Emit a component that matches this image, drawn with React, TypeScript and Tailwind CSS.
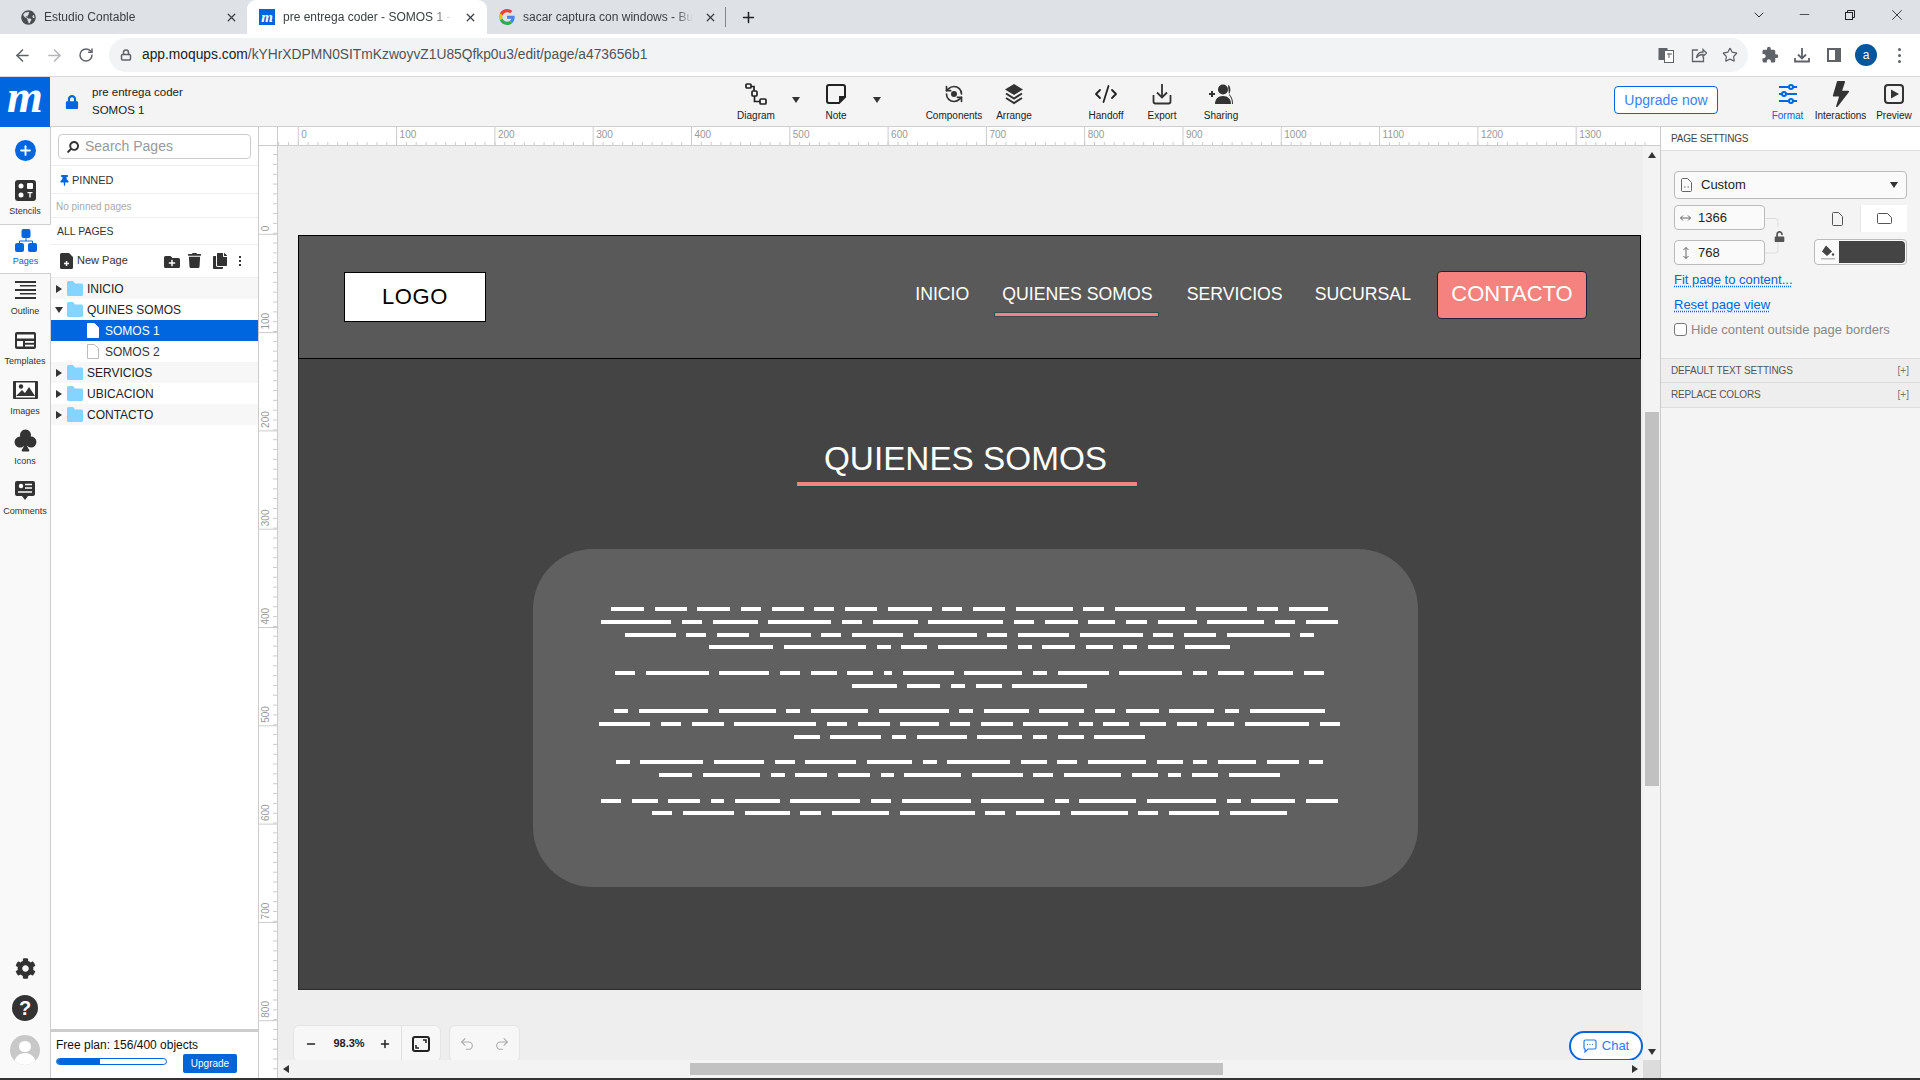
import React from "react";
import { ArrowLeft, ArrowRight, ChevronDown, Lock, Minus, Plus, RotateCw, Star, Undo2, Redo2, X, CodeXml, RefreshCcw } from "lucide-react";
import { BsLightningFill, BsSuitClubFill } from "react-icons/bs";
import { FaCog, FaCopy, FaFolderPlus, FaGlobeAmericas, FaLock, FaSearch, FaThumbtack, FaTrash, FaUnlock } from "react-icons/fa";
import { MdExtension } from "react-icons/md";

const font = { fontFamily: '"Liberation Sans", Arial, sans-serif' };

// widths of the redacted words, one array per line, lines grouped in paragraphs
const paragraphs = [
  [
    [33, 32, 33, 20, 32, 20, 32, 44, 20, 32, 57, 21, 70, 51, 21, 39],
    [70, 20, 45, 63, 20, 45, 75, 20, 33, 27, 21, 39, 57, 20, 32],
    [51, 20, 32, 51, 20, 51, 63, 20, 51, 63, 20, 32, 63, 14],
    [64, 82, 14, 26, 69, 14, 33, 27, 14, 26, 45],
  ],
  [
    [20, 63, 50, 20, 26, 26, 8, 51, 58, 14, 51, 63, 14, 26, 39, 20],
    [45, 33, 14, 26, 75],
  ],
  [
    [14, 69, 57, 14, 57, 70, 14, 45, 45, 20, 33, 45, 14, 75],
    [51, 20, 32, 82, 20, 32, 39, 20, 32, 45, 14, 26, 26, 20, 27, 64, 20],
    [26, 51, 14, 50, 45, 14, 26, 51],
  ],
  [
    [14, 63, 50, 20, 51, 45, 14, 63, 26, 20, 58, 26, 14, 38, 32, 14],
    [33, 57, 14, 32, 32, 13, 57, 51, 20, 57, 26, 13, 26, 51],
  ],
  [
    [20, 26, 32, 13, 45, 70, 20, 69, 63, 14, 57, 69, 14, 44, 32],
    [20, 51, 45, 21, 57, 75, 20, 44, 57, 20, 50, 57],
  ],
];

const Caret = ({ dir = "down", className = "" }: { dir?: "down" | "up" | "left" | "right"; className?: string }) => {
  const pts = { down: "0,1 8,1 4,7", up: "0,7 8,7 4,1", left: "7,0 7,8 1,4", right: "1,0 1,8 7,4" }[dir];
  return (
    <svg width="8" height="8" viewBox="0 0 8 8" className={className}>
      <polygon points={pts} fill="#333" />
    </svg>
  );
};

const GoogleG = () => (
  <svg width="16" height="16" viewBox="0 0 48 48">
    <path fill="#EA4335" d="M24 9.5c3.5 0 6.700 1.300 9.100 3.500l6.800-6.800C35.800 2.400 30.300 0 24 0 14.600 0 6.500 5.400 2.600 13.200l7.900 6.100C12.400 13.600 17.700 9.500 24 9.500z" />
    <path fill="#4285F4" d="M46.900 24.500c0-1.600-.1-3.100-.4-4.500H24v9h12.900c-.6 3-2.200 5.500-4.800 7.200l7.700 6c4.500-4.200 7.100-10.300 7.100-17.700z" />
    <path fill="#FBBC05" d="M10.500 28.700c-.5-1.500-.8-3-.8-4.700s.3-3.200.8-4.700l-7.900-6.100C.9 16.500 0 20.100 0 24s.9 7.500 2.600 10.800l7.900-6.100z" />
    <path fill="#34A853" d="M24 48c6.500 0 11.900-2.100 15.800-5.800l-7.700-6c-2.100 1.400-4.900 2.300-8.100 2.300-6.300 0-11.600-4.100-13.500-9.800l-7.900 6.100C6.500 42.600 14.600 48 24 48z" />
  </svg>
);

const Tab = ({ icon, title, active, width }: { icon: React.ReactNode; title: string; active?: boolean; width: string }) => (
  <div className={`flex h-[34px] items-center pl-[12px] shrink-0 ${width} ${active ? "bg-white rounded-t-[9px]" : ""}`}>
    <div className="w-[16px] flex justify-center shrink-0">{icon}</div>
    <div className={`ml-[8px] w-[170px] overflow-hidden whitespace-nowrap text-[12px] text-[#3c4043] ${active ? "[mask-image:linear-gradient(to_right,black_88%,transparent)]" : "[mask-image:linear-gradient(to_right,black_90%,transparent)]"}`}>{title}</div>
    <X size={13} strokeWidth={2.4} className="ml-[11px] text-[#3c4043] shrink-0" />
  </div>
);

const BrowserChrome = () => (
  <div className="shrink-0">
    <div className="flex h-[34px] bg-[#dee1e6] items-center">
      <div className="w-[8px] shrink-0" />
      <Tab width="w-[239px]" title="Estudio Contable" icon={<FaGlobeAmericas size={15} className="text-[#4a4d50]" />} />
      <Tab
        width="w-[240px]"
        active
        title="pre entrega coder - SOMOS 1 - Moqups"
        icon={<div className="w-[16px] h-[16px] bg-[#0066e0] text-white flex items-center justify-center text-[15px] italic font-bold leading-none" style={{ fontFamily: '"Liberation Serif", serif' }}>m</div>}
      />
      <Tab width="w-[238px]" title="sacar captura con windows - Buscar con Google" icon={<GoogleG />} />
      <div className="w-px h-[20px] bg-[#80868b]" />
      <Plus size={17} strokeWidth={2.2} className="ml-[14px] text-[#202124]" />
      <div className="ml-auto flex items-center text-[#202124] -mt-[5px]">
        <ChevronDown size={16} strokeWidth={1.4} className="mr-[30px]" />
        <Minus size={15} strokeWidth={1.2} className="mr-[32px]" />
        <svg width="12" height="12" viewBox="0 0 12 12" fill="none" stroke="#202124" className="mr-[32px]">
          <rect x="1.500" y="3.500" width="7" height="7" />
          <path d="M3.500 3.500V1.500h7v7H8.500" />
        </svg>
        <X size={18} strokeWidth={1.1} className="mr-[14px]" />
      </div>
    </div>
    <div className="flex h-[43px] bg-white border-b border-[#d8d8d8] items-center">
      <ArrowLeft size={19} strokeWidth={2} className="ml-[13px] text-[#5f6368]" />
      <ArrowRight size={19} strokeWidth={2} className="ml-[13px] text-[#b4b6b9]" />
      <RotateCw size={16} strokeWidth={2.2} className="ml-[14px] text-[#5f6368]" />
      <div className="ml-[15px] flex items-center h-[34px] w-[1639px] rounded-full bg-[#f1f3f4]">
        <Lock size={12} strokeWidth={3} className="ml-[11px] text-[#5f6368]" />
        <div className="ml-[10px] text-[13.800px] text-[#202124]">
          app.moqups.com<span className="text-[#50545a]">/kYHrXDPMN0SITmKzwoyvZ1U85Qfkp0u3/edit/page/a473656b1</span>
        </div>
        <div className="ml-auto flex items-center">
          <svg width="16" height="16" viewBox="0 0 16 16" className="mr-[17px]">
            <rect x="0.500" y="1" width="9" height="12" fill="#5f6368" />
            <rect x="6.500" y="3.500" width="9" height="12" fill="#fff" stroke="#5f6368" />
            <path d="M9 7h5M11 6v5" stroke="#5f6368" />
          </svg>
          <svg width="16" height="16" viewBox="0 0 16 16" fill="none" stroke="#5f6368" strokeWidth="1.300" className="mr-[15px]">
            <path d="M7 3H1.500v11.500h11V10" />
            <path d="M5.500 11c.5-4 3-6 6.500-6V2.500L15.500 6 12 9.500V7.500c-3 0-5 1-6.500 3.500z" />
          </svg>
          <Star size={16} strokeWidth={1.8} className="mr-[10px] text-[#5f6368]" />
        </div>
      </div>
      <MdExtension size={18} className="ml-[13px] text-[#5f6368]" />
      <svg width="16" height="16" viewBox="0 0 16 16" fill="none" stroke="#5f6368" strokeWidth="1.800" className="ml-[15px]">
        <path d="M8 1v10M4 7.500 8 11.500l4-4M1 11v3.500h14V11" />
      </svg>
      <svg width="14" height="14" viewBox="0 0 14 14" className="ml-[17px]">
        <rect x="1" y="1" width="12" height="12" fill="none" stroke="#5f6368" strokeWidth="2" />
        <rect x="8" y="1" width="5" height="12" fill="#5f6368" />
      </svg>
      <div className="ml-[14px] w-[22px] h-[22px] rounded-full bg-[#01579b] text-white text-[12px] flex items-center justify-center">a</div>
      <div className="ml-[21px] flex flex-col gap-[3px]">
        <div className="w-[3px] h-[3px] rounded-full bg-[#5f6368]" />
        <div className="w-[3px] h-[3px] rounded-full bg-[#5f6368]" />
        <div className="w-[3px] h-[3px] rounded-full bg-[#5f6368]" />
      </div>
    </div>
  </div>
);

const ToolBtn = ({ icon, label, width, active, className = "" }: { icon: React.ReactNode; label: string; width: string; active?: boolean; className?: string }) => (
  <div className={`flex flex-col items-center shrink-0 ${width} ${className}`}>
    <div className="h-[25px] mt-[4px] flex items-center justify-center">{icon}</div>
    <div className={`mt-[4px] text-[10px] leading-[12px] whitespace-nowrap ${active ? "text-[#0066e0]" : "text-[#222]"}`}>{label}</div>
  </div>
);

const AppHeader = () => (
  <div className="flex h-[50px] shrink-0 bg-[#f4f4f4] border-b border-[#d0d0d0]">
    <div className="w-[50px] h-[50px] bg-[#0066e0] text-white flex items-center justify-center text-[46px] italic font-bold leading-none pb-[10px]" style={{ fontFamily: '"Liberation Serif", serif' }}>m</div>
    <FaLock size={14} className="ml-[15px] mt-[18px] text-[#0066e0]" />
    <div className="ml-[13px] w-[636px] text-[11.500px] leading-[18px] text-[#222] pt-[6px]">
      <div>pre entrega coder</div>
      <div>SOMOS 1</div>
    </div>
    <ToolBtn
      width="w-[56px]"
      label="Diagram"
      icon={
        <svg width="22" height="22" viewBox="0 0 22 22" fill="none" stroke="#222" strokeWidth="1.700">
          <rect x="1" y="1" width="5" height="4" rx="1" />
          <rect x="7" y="8" width="5" height="5" rx="1" />
          <rect x="15" y="16" width="6" height="5" rx="1" />
          <path d="M6 3.500h3v4.500M9.500 13v5.500H15" />
        </svg>
      }
    />
    <div className="w-[24px] flex items-center justify-center pb-[3px]"><Caret /></div>
    <ToolBtn
      width="w-[56px]"
      label="Note"
      icon={
        <svg width="20" height="20" viewBox="0 0 20 20" fill="none" stroke="#222" strokeWidth="2">
          <path d="M3 1h14a2 2 0 0 1 2 2v10l-6 6H3a2 2 0 0 1-2-2V3a2 2 0 0 1 2-2z" />
          <path d="M19 12h-6v7z" fill="#222" stroke="none" />
        </svg>
      }
    />
    <div className="w-[24px] flex items-center justify-center pb-[3px] ml-px"><Caret /></div>
    <ToolBtn
      width="w-[60px]"
      className="ml-[35px]"
      label="Components"
      icon={
        <div className="relative flex items-center justify-center">
          <RefreshCcw size={20} strokeWidth={2} className="text-[#333]" />
          <div className="absolute w-[6px] h-[6px] rounded-full bg-[#333]" />
        </div>
      }
    />
    <ToolBtn
      width="w-[60px]"
      label="Arrange"
      icon={
        <svg width="20" height="22" viewBox="0 0 20 22">
          <polygon points="10,1 19,6.500 10,12 1,6.500" fill="#333" />
          <path d="M2 10.500l8 5 8-5M2 15l8 5 8-5" fill="none" stroke="#333" strokeWidth="2" />
        </svg>
      }
    />
    <ToolBtn width="w-[56px]" className="ml-[34px]" label="Handoff" icon={<CodeXml size={24} strokeWidth={1.8} className="text-[#222]" />} />
    <ToolBtn
      width="w-[56px]"
      label="Export"
      icon={
        <svg width="20" height="22" viewBox="0 0 20 22" fill="none" stroke="#333" strokeWidth="1.800">
          <path d="M10 1v13M5 9.500l5 5 5-5M1.500 12v6.500a2 2 0 0 0 2 2h13a2 2 0 0 0 2-2V12" />
        </svg>
      }
    />
    <ToolBtn
      width="w-[56px]"
      className="ml-[3px]"
      label="Sharing"
      icon={
        <svg width="24" height="20" viewBox="0 0 24 20" fill="#333">
          <path d="M0 9h6v2H0zM2 7h2v6H2z" />
          <circle cx="14" cy="5.500" r="5" />
          <path d="M6 20c0-5 3-8 8-8s8 3 8 8z" />
          <path d="M19 1c3 1 3 7 1 9 2 2 4 4 4 10h-1c0-4-1-7-3-9z" />
        </svg>
      }
    />
    <div className="ml-auto flex">
      <div className="w-[104px] h-[28px] mt-[9px] rounded-[4px] border border-[#0066e0] bg-white text-[14px] text-[#3b82f0] flex items-center justify-center">Upgrade now</div>
      <ToolBtn
        width="w-[53px]"
        className="ml-[43px]"
        active
        label="Format"
        icon={
          <svg width="20" height="22" viewBox="0 0 20 22" stroke="#0066e0" strokeWidth="2" fill="#f4f4f4">
            <path d="M1 4h18M1 11h18M1 18h18" />
            <circle cx="13" cy="4" r="2" />
            <circle cx="6" cy="11" r="2" />
            <circle cx="13" cy="18" r="2" />
          </svg>
        }
      />
      <ToolBtn width="w-[53px]" label="Interactions" icon={<BsLightningFill size={26} className="text-[#333]" />} />
      <ToolBtn
        width="w-[52px]"
        className="ml-px"
        label="Preview"
        icon={
          <svg width="20" height="20" viewBox="0 0 20 20">
            <rect x="1" y="1" width="18" height="18" rx="3" fill="none" stroke="#333" strokeWidth="2" />
            <polygon points="7,5.500 15,10 7,14.500" fill="#333" />
          </svg>
        }
      />
    </div>
  </div>
);

const SideItem = ({ icon, label, active, className = "" }: { icon: React.ReactNode; label: string; active?: boolean; className?: string }) => (
  <div className={`flex flex-col items-center h-[50px] shrink-0 ${active ? "pt-[3px] relative w-[51px] bg-white text-[#0066e0] border-y border-[#d0d0d0]" : "pt-[4px] w-[50px] text-[#333]"} ${className}`}>
    <div className="h-[24px] flex items-center justify-center">{icon}</div>
    <div className="mt-[3px] text-[9px] leading-[12px]">{label}</div>
  </div>
);

const Sidebar = () => (
  <div className="w-[51px] shrink-0 flex flex-col bg-[#f9f9f9] border-r border-[#ccc]">
    <div className="h-[47px] flex items-center justify-center shrink-0">
      <div className="w-[21px] h-[21px] rounded-full bg-[#0066e0] flex items-center justify-center">
        <Plus size={15} strokeWidth={3} className="text-white" />
      </div>
    </div>
    <SideItem
      label="Stencils"
      icon={
        <svg width="21" height="21" viewBox="0 0 21 21">
          <rect width="21" height="21" rx="3" fill="#333" />
          <circle cx="6" cy="6" r="2.500" fill="#fff" />
          <rect x="12" y="3" width="6" height="6" rx="1" fill="#fff" />
          <circle cx="6" cy="15" r="2.500" fill="#fff" />
          <path d="M12.500 12h5v1.200h-1.800v4.300h-1.400v-4.300h-1.800z" fill="#fff" />
        </svg>
      }
    />
    <SideItem
      active
      label="Pages"
      icon={
        <svg width="22" height="23" viewBox="0 0 22 23" fill="#0066e0">
          <rect x="6.500" y="0" width="9" height="9" rx="2" />
          <rect x="0" y="14" width="9" height="9" rx="2" />
          <rect x="13" y="14" width="9" height="9" rx="2" />
          <path d="M11 9v3M4.500 14v-2h13v2" stroke="#0066e0" fill="none" />
        </svg>
      }
    />
    <SideItem
      label="Outline"
      icon={
        <svg width="21" height="18" viewBox="0 0 21 18" fill="#333">
          <rect x="0" y="0" width="21" height="2" />
          <rect x="5" y="4" width="16" height="1.500" />
          <rect x="0" y="8" width="21" height="2" />
          <rect x="5" y="12" width="16" height="1.500" />
          <rect x="0" y="16" width="21" height="2" />
        </svg>
      }
    />
    <SideItem
      label="Templates"
      icon={
        <svg width="21" height="17" viewBox="0 0 21 17">
          <rect width="21" height="17" rx="2" fill="#333" />
          <rect x="2" y="2.500" width="17" height="4" fill="#fff" />
          <rect x="2" y="9" width="6" height="5.500" fill="#fff" />
          <rect x="10" y="9" width="9" height="1.800" fill="#fff" />
          <rect x="10" y="12.700" width="9" height="1.800" fill="#fff" />
        </svg>
      }
    />
    <SideItem
      label="Images"
      icon={
        <svg width="25" height="18" viewBox="0 0 25 18">
          <rect width="25" height="18" rx="1" fill="#333" />
          <rect x="3" y="1.500" width="19" height="15" fill="#fff" />
          <circle cx="8" cy="5.500" r="2.200" fill="#333" />
          <polygon points="3,15 9,9 12,12 16,6 22,15" fill="#333" />
        </svg>
      }
    />
    <SideItem label="Icons" icon={<BsSuitClubFill size={25} className="text-[#333]" />} />
    <SideItem
      label="Comments"
      icon={
        <svg width="20" height="19" viewBox="0 0 20 19">
          <path d="M2 0h16a2 2 0 0 1 2 2v11a2 2 0 0 1-2 2h-5l-3 4-3-4H2a2 2 0 0 1-2-2V2a2 2 0 0 1 2-2z" fill="#333" />
          <circle cx="6" cy="5" r="2.200" fill="#fff" />
          <path d="M10 3.500h7M10 7h7M3 11h14" stroke="#fff" strokeWidth="1.500" />
        </svg>
      }
    />
    <div className="mt-auto flex flex-col items-center">
      <FaCog size={21} className="text-[#333]" />
      <div className="mt-[16px] w-[26px] h-[26px] rounded-full bg-[#333] text-white flex items-center justify-center text-[20px] font-bold leading-none">?</div>
      <div className="mt-[14px] mb-[13px] w-[30px] h-[30px] rounded-full bg-[#c8c8c8] overflow-hidden flex flex-col items-center">
        <div className="mt-[6px] w-[12px] h-[13px] rounded-full bg-white" />
        <div className="mt-[1px] w-[22px] h-[14px] rounded-t-full bg-white" />
      </div>
    </div>
  </div>
);

const FolderIcon = () => (
  <svg width="16" height="15" viewBox="0 0 16 15">
    <path d="M1.500 0h4.500l2 2.500h6.500a1.500 1.500 0 0 1 1.500 1.500v9.500a1.500 1.500 0 0 1-1.500 1.500h-13A1.500 1.500 0 0 1 0 13.500v-12A1.500 1.500 0 0 1 1.500 0z" fill="#84d4ff" />
  </svg>
);

const FolderRow = ({ name, open, shaded }: { name: string; open?: boolean; shaded?: boolean }) => (
  <div className={`flex items-center h-[21px] ${shaded ? "bg-[#f7f7f7]" : ""}`}>
    <Caret dir={open ? "down" : "right"} className="ml-[4px] shrink-0" />
    <div className="ml-[4px]"><FolderIcon /></div>
    <span className="ml-[4px] text-[12px] text-[#222]">{name}</span>
  </div>
);

const PageRow = ({ name, active }: { name: string; active?: boolean }) => (
  <div className={`flex items-center h-[21px] pl-[36px] ${active ? "bg-[#0066e0] text-white" : "text-[#333]"}`}>
    <svg width="12" height="15" viewBox="0 0 12 15">
      <path d="M.500.500h7l4 4v10h-11z" fill={active ? "#fff" : "none"} stroke={active ? "#fff" : "#bbb"} />
    </svg>
    <span className="ml-[6px] text-[12px]">{name}</span>
  </div>
);

const PagesPanel = () => (
  <div className="w-[208px] shrink-0 flex flex-col bg-white border-r border-[#ccc]">
    <div className="h-[39px] border-b border-[#eee] shrink-0 pl-[7px] pt-[7px]">
      <div className="w-[193px] h-[25px] border border-[#ccc] rounded-[4px] flex items-center">
        <FaSearch size={12} className="ml-[8px] -scale-x-100 text-[#333]" />
        <span className="ml-[6px] text-[14px] text-[#999]">Search Pages</span>
      </div>
    </div>
    <div className="h-[28px] border-b border-[#eee] shrink-0 flex items-center pl-[8px] pt-[2px]">
      <FaThumbtack size={11} className="text-[#0066e0]" />
      <span className="ml-[2px] text-[11px] text-[#333]">PINNED</span>
    </div>
    <div className="h-[24px] border-b border-[#eee] shrink-0 flex items-center pl-[5px] pt-[2px] text-[10px] text-[#aaa]">No pinned pages</div>
    <div className="h-[27px] border-b border-[#eee] shrink-0 flex items-center pl-[6px] pt-[2px] text-[10.500px] text-[#333]">ALL PAGES</div>
    <div className="h-[33px] border-b border-[#eee] shrink-0 flex items-center pl-[9px] pb-px text-[#333]">
      <svg width="13" height="16" viewBox="0 0 13 16">
        <path d="M1.500 0H9l4 4v10.500a1.500 1.500 0 0 1-1.500 1.500h-10A1.500 1.500 0 0 1 0 14.500v-13A1.500 1.500 0 0 1 1.500 0z" fill="#333" />
        <path d="M6.500 8v5M4 10.500h5" stroke="#fff" strokeWidth="1.500" />
      </svg>
      <span className="ml-[4px] text-[11px]">New Page</span>
      <FaFolderPlus size={16} className="ml-[36px] mt-[2px]" />
      <FaTrash size={15} className="ml-[7px]" />
      <FaCopy size={16} className="ml-[10px]" />
      <div className="ml-[11px] flex flex-col gap-[2px]">
        <div className="w-[2px] h-[2px] bg-[#333]" />
        <div className="w-[2px] h-[2px] bg-[#333]" />
        <div className="w-[2px] h-[2px] bg-[#333]" />
      </div>
    </div>
    <FolderRow name="INICIO" shaded />
    <FolderRow name="QUINES SOMOS" open />
    <PageRow name="SOMOS 1" active />
    <PageRow name="SOMOS 2" />
    <FolderRow name="SERVICIOS" shaded />
    <FolderRow name="UBICACION" />
    <FolderRow name="CONTACTO" shaded />
    <div className="mt-auto h-[49px] border-t-[3px] border-[#ccc] pl-[5px] pt-[6px] shrink-0">
      <div className="text-[12px] leading-[14px] text-[#111]">Free plan: 156/400 objects</div>
      <div className="flex items-start mt-[2px]">
        <div className="mt-[4px] w-[111px] h-[7px] rounded-full border border-[#0066e0] overflow-hidden bg-white">
          <div className="h-full bg-[#0066e0]" style={{ width: `${(156 / 400) * 100}%` }} />
        </div>
        <div className="ml-[16px] w-[54px] h-[19px] rounded-[2px] bg-[#0066d8] text-white text-[10px] flex items-center justify-center">Upgrade</div>
      </div>
    </div>
  </div>
);

const HRuler = () => {
  const zero = 39.3;
  const minors = Array.from({ length: 140 }, (_, i) => zero + i * 9.83 - 9.83 * 2);
  return (
    <svg width="1401" height="19" className="shrink-0 block bg-white">
      {minors.map((x, i) => (
        <line key={i} x1={x} x2={x} y1="15" y2="19" stroke="#ccc" />
      ))}
      <line x1="18.500" x2="18.500" y1="0" y2="19" stroke="#ccc" />
      {Array.from({ length: 14 }, (_, k) => (
        <g key={k}>
          <line x1={zero + k * 98.3} x2={zero + k * 98.3} y1="0" y2="19" stroke="#ccc" />
          <text x={zero + k * 98.3 + 3} y="11" fontSize="10" fill="#999" fontFamily="Liberation Sans">{k * 100}</text>
        </g>
      ))}
      <line x1="0" x2="1401" y1="18.500" y2="18.500" stroke="#ccc" />
    </svg>
  );
};

const VRuler = () => {
  const zero = 88.3;
  const minors = Array.from({ length: 95 }, (_, i) => 10 + i * 9.83 - 1.4);
  return (
    <svg width="19" height="932" className="shrink-0 block bg-white">
      {minors.map((y, i) => (
        <line key={i} x1="14" x2="19" y1={y} y2={y} stroke="#ccc" />
      ))}
      {Array.from({ length: 9 }, (_, k) => (
        <g key={k}>
          <line x1="0" x2="19" y1={zero + k * 98.3} y2={zero + k * 98.3} stroke="#ccc" />
          <text transform={`translate(9.500 ${zero + k * 98.3 - 3}) rotate(-90)`} fontSize="10" fill="#999" fontFamily="Liberation Sans">{k * 100}</text>
        </g>
      ))}
      <line x1="18.500" x2="18.500" y1="0" y2="932" stroke="#ccc" />
    </svg>
  );
};

const NavLink = ({ label, className = "" }: { label: string; className?: string }) => (
  <span className={`block text-[17.700px] pb-[2px] text-white whitespace-nowrap ${className}`}>{label}</span>
);

const MockPage = () => (
  <div className="w-[1343px] h-[755px] shrink-0 flex flex-col">
    <div className="h-[124px] shrink-0 bg-[#595959] border border-black flex items-center pl-[45px] pr-[53px]">
      <div className="w-[142px] h-[50px] pb-[2px] bg-white border border-black flex items-center justify-center text-[22px] tracking-[0.6px] text-black">LOGO</div>
      <div className="ml-auto flex items-center mb-[4px]">
        <NavLink label="INICIO" />
        <div className="relative ml-[33px]">
          <NavLink label="QUIENES SOMOS" />
          <div className="absolute -left-[7px] -right-[5px] -bottom-[7px] h-[3px] bg-[#f5827e] shadow-[0_0_0_1px_#3b4a4a]" />
        </div>
        <NavLink label="SERVICIOS" className="ml-[34px]" />
        <NavLink label="SUCURSAL" className="ml-[32px]" />
        <div className="ml-[26px] w-[150px] h-[48px] pb-[3px] rounded-[4px] bg-[#f5827e] border border-[#223] text-white text-[22px] flex items-center justify-center">CONTACTO</div>
      </div>
    </div>
    <div className="flex-1 bg-[#444444] border-l border-b border-[#2c2c2c] flex flex-col items-start">
      <div className="ml-[498px] mt-[80px] w-[340px] text-center text-[33.300px] leading-[40px] text-white whitespace-nowrap pr-[3px]">QUIENES SOMOS</div>
      <div className="ml-[498px] mt-[3px] w-[340px] h-[4px] bg-[#f5827e] shadow-[0_1px_0_#2c4a4a]" />
      <div className="ml-[234px] mt-[63px] w-[885px] h-[338px] rounded-[60px] bg-[#606060] pt-[54px] pr-[12px] flex flex-col items-center gap-[13px]">
        {paragraphs.map((lines, p) => (
          <div key={p} className="flex flex-col items-center">
            {lines.map((words, l) => (
              <div key={l} className="flex items-center gap-[10.670px] h-[12.670px]">
                {words.map((w, i) => (
                  <div key={i} className="h-[4px] bg-white" style={{ width: w }} />
                ))}
              </div>
            ))}
          </div>
        ))}
      </div>
    </div>
  </div>
);

const Workspace = () => (
  <div className="w-[1401px] shrink-0 flex flex-col">
    <HRuler />
    <div className="flex flex-1 min-h-0">
      <VRuler />
      <div className="flex flex-col flex-1 min-w-0">
        <div className="relative flex-1 min-h-0 bg-[#eeeeee] pl-[20px] pt-[89px] overflow-hidden">
          <MockPage />
          {/* floating zoom controls */}
          <div className="absolute left-[15px] top-[879px] flex">
            <div className="h-[37px] flex items-center rounded-[6px] border border-[#e4e4e4] bg-[#f7f7f7] text-[#222]">
              <Minus size={12} strokeWidth={3} className="ml-[11px]" />
              <span className="ml-[12px] w-[40px] text-center text-[11px] font-bold">98.3%</span>
              <Plus size={12} strokeWidth={3} className="ml-[10px]" />
              <div className="ml-[10px] w-px h-full bg-[#e0e0e0]" />
              <svg width="18" height="16" viewBox="0 0 18 16" fill="none" stroke="#222" className="ml-[10px] mr-[10px]">
                <rect x="1" y="1" width="16" height="14" rx="2" strokeWidth="2" />
                <path d="M11 4h3v3M7 12H4V9" strokeWidth="1.500" />
              </svg>
            </div>
            <div className="ml-[8px] h-[37px] w-[71px] flex items-center justify-center gap-[19px] rounded-[6px] border border-[#e4e4e4] bg-[#f7f7f7] text-[#aaa]">
              <Undo2 size={16} strokeWidth={1.600} />
              <Redo2 size={16} strokeWidth={1.600} />
            </div>
          </div>
          <div className="absolute right-0 top-[885px] w-[74px] h-[30px] rounded-full border-2 border-[#0066e0] bg-white flex items-center justify-center text-[#2a7de8] text-[13px]">
            <svg width="14" height="14" viewBox="0 0 14 14" fill="none" stroke="#2a7de8" strokeWidth="1.200" className="mr-[5px]">
              <path d="M2.500 1h9a1.500 1.500 0 0 1 1.500 1.500v6A1.500 1.500 0 0 1 11.500 10H5l-3 3v-3A1.500 1.500 0 0 1 1 8.500v-6A1.500 1.500 0 0 1 2.500 1z" />
              <path d="M4 5.500h1M6.500 5.500h1M9 5.500h1" />
            </svg>
            Chat
          </div>
        </div>
        <div className="h-[18px] shrink-0 bg-[#f3f3f3] flex items-center">
          <Caret dir="left" className="ml-[4px]" />
          <div className="ml-[400px] w-[533px] h-[12px] bg-[#c1c1c1]" />
          <Caret dir="right" className="ml-auto mr-[4px]" />
        </div>
      </div>
      <div className="w-[17px] shrink-0 bg-[#f3f3f3] flex flex-col items-center pt-[5px]">
        <Caret dir="up" />
        <div className="mt-[253px] w-[14px] h-[374px] bg-[#c1c1c1]" />
        <Caret dir="down" className="mt-[262px]" />
        <div className="mt-auto w-full h-[18px] bg-[#dcdcdc]" />
      </div>
    </div>
  </div>
);

const SectionRow = ({ label, height }: { label: string; height: string }) => (
  <div className={`${height} bg-[#eeeeee] border-b border-[#dcdcdc] flex items-center justify-between pl-[10px] pr-[11px] text-[10px] text-[#555]`}>
    <span className="tracking-[-0.150px]">{label}</span>
    <span className="text-[#777]">[+]</span>
  </div>
);

const RightPanel = () => (
  <div className="w-[260px] shrink-0 bg-[#f4f4f4] border-l border-[#ccc] flex flex-col">
    <div className="h-[24px] bg-white border-b border-[#ddd] flex items-center pl-[10px] text-[10px] tracking-[-0.2px] text-[#444]">PAGE SETTINGS</div>
    <div className="mx-[13px] mt-[20px] w-[233px] h-[28px] rounded-[4px] border border-[#bbb] bg-[#fafafa] flex items-center">
      <svg width="11" height="14" viewBox="0 0 11 14" fill="none" stroke="#666" className="ml-[6px]">
        <path d="M1.500.500h5l4 4v8a1 1 0 0 1-1 1h-8a1 1 0 0 1-1-1v-11a1 1 0 0 1 1-1z" />
        <path d="M3 9h1.500M6.500 9H8" />
      </svg>
      <span className="ml-[9px] text-[13px] text-[#222]">Custom</span>
      <Caret className="ml-auto mr-[8px]" />
    </div>
    <div className="mx-[13px] mt-[6px] flex">
      <div className="flex flex-col gap-[10px]">
        <div className="w-[91px] h-[25px] rounded-[4px] border border-[#bbb] bg-[#fafafa] flex items-center text-[13px] text-[#222]">
          <svg width="11" height="8" viewBox="0 0 11 8" fill="none" stroke="#666" className="ml-[5px] mr-[7px]"><path d="M.500 4h10M3 1.500.500 4 3 6.500M8 1.500 10.500 4 8 6.500" /></svg>
          1366
        </div>
        <div className="w-[91px] h-[25px] rounded-[4px] border border-[#bbb] bg-[#fafafa] flex items-center text-[13px] text-[#222]">
          <svg width="8" height="12" viewBox="0 0 8 12" fill="none" stroke="#666" className="ml-[7px] mr-[8px]"><path d="M4 .500v11M1.500 3 4 .500 6.500 3M1.500 9 4 11.500 6.500 9" /></svg>
          768
        </div>
      </div>
      <div className="relative w-[49px]">
        <svg width="20" height="36" viewBox="0 0 20 36" fill="none" stroke="#ddd" className="absolute left-0 top-[13px]">
          <path d="M0 .500h10a3 3 0 0 1 3 3V9M13 24v8a3 3 0 0 1-3 3H0" />
        </svg>
        <FaUnlock size={11} className="absolute left-[9px] top-[26px] text-[#555]" />
      </div>
      <div className="w-[93px] flex flex-col">
        <div className="h-[27px] flex">
          <div className="w-[46px] flex items-center justify-center">
            <svg width="11" height="14" viewBox="0 0 11 14" fill="none" stroke="#555"><path d="M1.500.500h5l4 4v8a1 1 0 0 1-1 1h-8a1 1 0 0 1-1-1v-11a1 1 0 0 1 1-1z" /></svg>
          </div>
          <div className="w-[47px] bg-white border-l border-[#e8e8e8] flex items-center justify-center">
            <svg width="15" height="11" viewBox="0 0 15 11" fill="none" stroke="#555"><path d="M1.500.500h9l4 4v5a1 1 0 0 1-1 1h-12a1 1 0 0 1-1-1v-8a1 1 0 0 1 1-1z" /></svg>
          </div>
        </div>
        <div className="mt-[7px] h-[26px] rounded-[4px] border border-[#bbb] bg-[#fafafa] flex items-center p-px">
          <svg width="14" height="15" viewBox="0 0 14 15" className="ml-[5px]">
            <path d="M5 .500 11 6.500 6 11 1 6.500z" fill="#444" />
            <circle cx="12" cy="9.500" r="1.200" fill="#444" />
            <rect x="0" y="13" width="14" height="1.500" fill="#bbb" />
          </svg>
          <div className="ml-[4px] flex-1 h-full bg-[#444444] rounded-r-[4px]" />
        </div>
      </div>
    </div>
    <div className="mx-[13px] mt-[7px] w-fit text-[13px] leading-[16px] text-[#0066e0] underline decoration-dotted underline-offset-2">Fit page to content...</div>
    <div className="mx-[13px] mt-[9px] w-fit text-[13px] leading-[16px] text-[#0066e0] underline decoration-dotted underline-offset-2">Reset page view</div>
    <div className="mx-[13px] mt-[7px] flex items-center">
      <div className="w-[13px] h-[13px] rounded-[3px] border border-[#777] bg-white" />
      <span className="ml-[4px] text-[13px] text-[#888]">Hide content outside page borders</span>
    </div>
    <div className="mt-[18px] border-t border-[#dcdcdc]">
      <SectionRow label="DEFAULT TEXT SETTINGS" height="h-[24px]" />
      <SectionRow label="REPLACE COLORS" height="h-[25px]" />
    </div>
  </div>
);

export default function App() {
  return (
    <div className="w-[1920px] h-[1080px] overflow-hidden flex flex-col bg-white" style={font}>
      <BrowserChrome />
      <AppHeader />
      <div className="flex flex-1 min-h-0">
        <Sidebar />
        <PagesPanel />
        <Workspace />
        <RightPanel />
      </div>
      <div className="h-[2px] shrink-0 bg-[#333]" />
    </div>
  );
}
